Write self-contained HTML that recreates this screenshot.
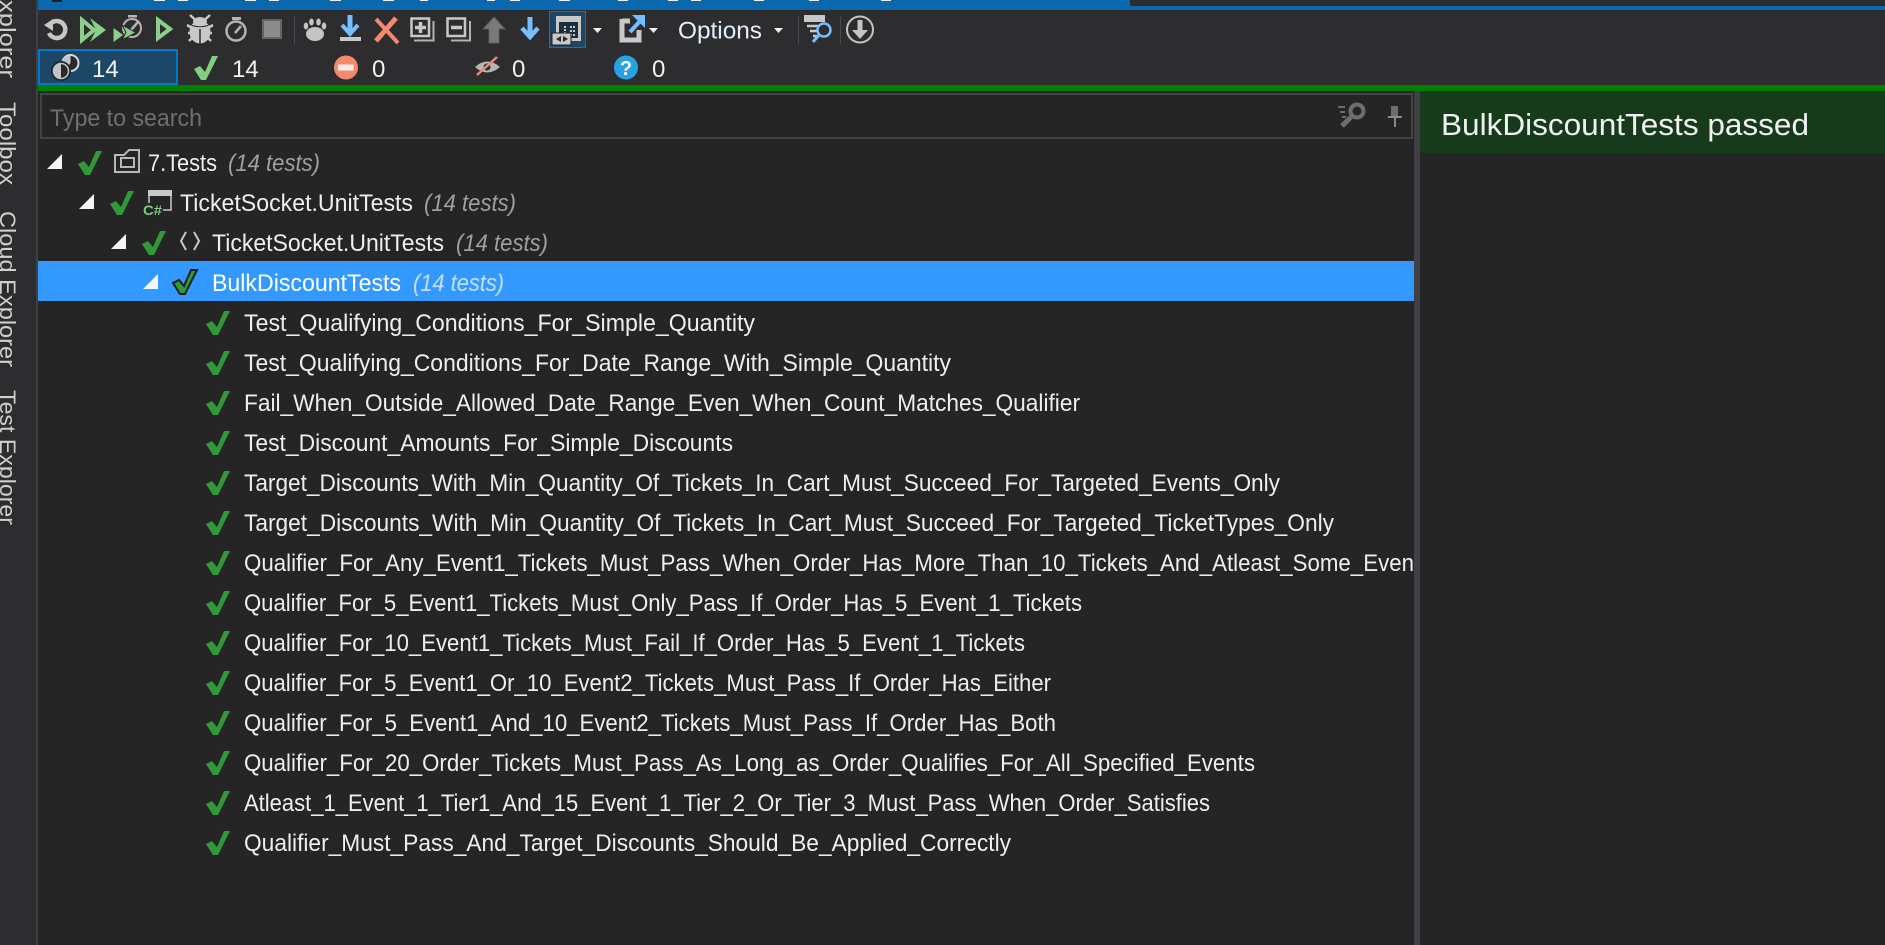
<!DOCTYPE html>
<html><head><meta charset="utf-8"><style>
html,body{margin:0;padding:0;background:#252526;width:1885px;height:945px;overflow:hidden}
svg{display:block;font-family:"Liberation Sans",sans-serif}
.t{fill:#eeeeee;font-size:24px}
.i{fill:#a0a0a0;font-size:24px;font-style:italic}
</style></head><body>
<svg width="1885" height="945" viewBox="0 0 1885 945" xmlns="http://www.w3.org/2000/svg">
<defs>
<polygon id="c" points="0,13 6,10 11,16 18,0 24,0 12,24 7,24"/>
<polygon id="tri" points="0,15 15,15 15,0" fill="#f5f5f5"/>
</defs>
<rect width="1885" height="945" fill="#252526"/>
<rect x="0" y="0" width="36" height="945" fill="#2d2d30"/>
<rect x="36" y="0" width="2" height="945" fill="#3f3f46"/>
<rect x="38" y="0" width="1847" height="91" fill="#2d2d30"/>
<rect x="38" y="0" width="1092" height="10" fill="#0a69ae"/>
<rect x="1130" y="6" width="755" height="4" fill="#0a69ae"/>
<g fill="#f0f0f0"><rect x="154" y="0" width="11" height="1"/><rect x="178" y="0" width="10" height="1"/><rect x="245" y="0" width="11" height="1"/><rect x="269" y="0" width="10" height="1"/><rect x="330" y="0" width="11" height="1"/><rect x="383" y="0" width="11" height="1"/><rect x="420" y="0" width="8" height="1"/><rect x="487" y="0" width="8" height="1"/><rect x="510" y="0" width="10" height="1"/><rect x="559" y="0" width="11" height="1"/><rect x="618" y="0" width="10" height="1"/><rect x="668" y="0" width="10" height="1"/><rect x="691" y="0" width="10" height="1"/><rect x="754" y="0" width="10" height="1"/><rect x="809" y="0" width="10" height="1"/><rect x="881" y="0" width="10" height="1"/></g>
<rect x="52" y="0" width="10" height="2" fill="#1e1e1e"/>

<!-- left rail -->
<g font-size="22" fill="#cfcfcf">
<text transform="translate(0,-17) rotate(90)" textLength="95" lengthAdjust="spacingAndGlyphs">Explorer</text>
<text transform="translate(0,102) rotate(90)" textLength="83" lengthAdjust="spacingAndGlyphs">Toolbox</text>
<text transform="translate(0,211) rotate(90)" textLength="156" lengthAdjust="spacingAndGlyphs">Cloud Explorer</text>
<text transform="translate(0,390) rotate(90)" textLength="135" lengthAdjust="spacingAndGlyphs">Test Explorer</text>
</g>

<!-- toolbar icons -->
<g>
<!-- refresh -->
<path d="M52 22.500 A8.500 8.500 0 1 1 49 33" fill="none" stroke="#c6c6c6" stroke-width="4.500"/>
<polygon points="44,25 53,19 53,31" fill="#c6c6c6"/>
<!-- run all -->
<path d="M82 20 L94 30 L82 40Z" fill="none" stroke="#8ad08a" stroke-width="4"/>
<polygon points="90,18 106,30 90,42 96,30" fill="#8ad08a"/>
<!-- run with stopwatch -->
<circle cx="132" cy="28" r="9" fill="none" stroke="#b4b4b4" stroke-width="2"/>
<rect x="128" y="15" width="9" height="2.500" fill="#b4b4b4"/>
<path d="M131 30 L138 22" stroke="#b4b4b4" stroke-width="2.500"/>
<polygon points="113,27 124,35 113,43" fill="#8ad08a" stroke="#2a2a2a" stroke-width="1"/>
<polygon points="122,25 136,32.500 122,40 126,32.500" fill="#8ad08a" stroke="#2a2a2a" stroke-width="1"/>
<!-- play -->
<path d="M158 20 L170 29 L158 38Z" fill="none" stroke="#8ad08a" stroke-width="4"/>
<!-- bug -->
<ellipse cx="200" cy="32" rx="10.500" ry="11.500" fill="#c8c8c8"/>
<ellipse cx="200" cy="21.500" rx="7" ry="4.500" fill="#c8c8c8"/>
<path d="M190 15 L195 19.500 M210 15 L205 19.500 M187 25 L192 28 M213 25 L208 28 M188 33 H192 M212 33 H208 M189 41 L192 38 M211 41 L208 38" stroke="#c8c8c8" stroke-width="2.500"/>
<path d="M200 29 V44" stroke="#2d2d30" stroke-width="1.500"/>
<path d="M192 25.500 Q200 28 208 25.500" fill="none" stroke="#2d2d30" stroke-width="1"/>
<!-- stopwatch -->
<circle cx="236" cy="31" r="9.500" fill="none" stroke="#b4b4b4" stroke-width="2.500"/>
<rect x="232" y="17" width="9" height="3" fill="#b4b4b4"/>
<path d="M235 33 L241 26" stroke="#b4b4b4" stroke-width="2.500"/>
<!-- stop -->
<rect x="263" y="20" width="18" height="18" fill="#8c8c8c" stroke="#666" stroke-width="2"/>
<rect x="294" y="16" width="1" height="28" fill="#4a4a4c"/>
<!-- paw -->
<ellipse cx="315" cy="34" rx="9" ry="7" fill="#c4c4c4"/>
<ellipse cx="306" cy="26" rx="2.300" ry="3.500" fill="#c4c4c4"/><ellipse cx="311.500" cy="22" rx="2.300" ry="3.500" fill="#c4c4c4"/><ellipse cx="318.500" cy="22" rx="2.300" ry="3.500" fill="#c4c4c4"/><ellipse cx="324" cy="26" rx="2.300" ry="3.500" fill="#c4c4c4"/>
<!-- step down arrow -->
<path d="M350 15 V32" stroke="#75beff" stroke-width="5"/>
<path d="M342 25 L350 34 L358 25" fill="none" stroke="#75beff" stroke-width="4"/>
<rect x="340" y="37" width="21" height="4" fill="#c8c8c8"/>
<!-- X -->
<path d="M376 19 L398 43" stroke="#f48771" stroke-width="4"/>
<path d="M396 18 L376 41" stroke="#f48771" stroke-width="5"/>
<!-- expand -->
<path d="M433.500 21 V40.500 H414" fill="none" stroke="#b4b4b4" stroke-width="2"/>
<rect x="411.500" y="18.500" width="17.500" height="17.500" fill="#2d2d30" stroke="#c8c8c8" stroke-width="2.500"/>
<path d="M415 27.500 H426 M420.500 22 V33" stroke="#c8c8c8" stroke-width="3.500"/>
<!-- collapse -->
<path d="M470 21 V40.500 H451" fill="none" stroke="#b4b4b4" stroke-width="2"/>
<rect x="447.500" y="18.500" width="17.500" height="17.500" fill="#2d2d30" stroke="#c8c8c8" stroke-width="2.500"/>
<path d="M451 27.500 H462" stroke="#c8c8c8" stroke-width="3.500"/>
<!-- up -->
<polygon points="494,17 505,29 499,29 499,43 489,43 489,29 483,29" fill="#7a7a7a" stroke="#5c5c5c" stroke-width="1"/>
<!-- down -->
<path d="M530 17 V36" stroke="#75beff" stroke-width="5"/>
<path d="M522 28 L530 37 L538 28" fill="none" stroke="#75beff" stroke-width="4.500"/>
<!-- selected grouping button -->
<rect x="549.500" y="11.500" width="36" height="36" fill="#1c4766" stroke="#007acc" stroke-width="1"/>
<rect x="556" y="16" width="25" height="25" fill="#1c2f3e"/>
<rect x="556" y="16" width="25" height="6" fill="#c8c8c8"/><rect x="556" y="22" width="3" height="14" fill="#c8c8c8"/><rect x="578" y="22" width="3" height="19" fill="#c8c8c8"/><rect x="566" y="38" width="15" height="3" fill="#c8c8c8"/>
<path d="M565 26 V34 M570 27 H576 M570 31 H576 M570 35 H576" stroke="#c8c8c8" stroke-width="2" stroke-dasharray="2 1"/>
<rect x="552" y="33" width="19" height="12" fill="#c8c8c8" stroke="#1e1e1e"/>
<polygon points="561,36 556,39 561,42" fill="#2d2d30"/><polygon points="563,36 568,39 563,42" fill="#2d2d30"/>
<polygon points="593,28 602,28 597.500,33" fill="#f1f1f1"/>
<!-- export -->
<path d="M622 21 H630 M622 19 V40 H639 V30" fill="none" stroke="#c8c8c8" stroke-width="5"/>
<path d="M630 32 L642 19" stroke="#75beff" stroke-width="4"/>
<polygon points="632,15 645,15 645,28" fill="#75beff"/>
<polygon points="649,28 658,28 653.500,33" fill="#f1f1f1"/>
<text x="678" y="38.500" font-size="24" fill="#e4effb" textLength="84" lengthAdjust="spacingAndGlyphs">Options</text>
<polygon points="774,28 783,28 778.500,33" fill="#f1f1f1"/>
<rect x="798" y="16" width="1" height="28" fill="#4a4a4c"/>
<!-- filter -->
<polygon points="804,15 825,15 825,22 804,22" fill="#c8c8c8"/>
<path d="M807 26 H821 M810 31 H818 M813 36 H817" stroke="#c8c8c8" stroke-width="2.500"/>
<circle cx="824" cy="30" r="6.500" fill="#2d2d30" stroke="#75beff" stroke-width="2.500"/>
<path d="M819 35 L813 42" stroke="#75beff" stroke-width="3"/>
<rect x="840" y="16" width="1" height="28" fill="#4a4a4c"/>
<circle cx="860" cy="29.500" r="13" fill="none" stroke="#c4c4c4" stroke-width="2"/>
<path d="M860 20 V34" stroke="#c4c4c4" stroke-width="5"/>
<polygon points="852,30 868,30 860,39" fill="#c4c4c4"/>
</g>

<!-- counters -->
<rect x="39" y="50" width="138" height="34" fill="#1c4766" stroke="#007acc" stroke-width="2"/>
<circle cx="70.500" cy="63" r="8" fill="#2a2a2c" stroke="#d8d8d8" stroke-width="2"/>
<path d="M70.500 56 A7 7 0 0 0 66 69 L70.500 63Z" fill="#c4c4c4"/>
<circle cx="61" cy="71" r="9" fill="#2a2a2c" stroke="#1e2a33" stroke-width="2"/>
<circle cx="61" cy="71" r="7.500" fill="none" stroke="#c4c4c4" stroke-width="1.500"/>
<path d="M61 63.500 A7.500 7.500 0 0 0 61 78.500Z" fill="#c4c4c4"/>
<g font-size="24" fill="#f1f1f1">
<text x="92" y="77">14</text>
<text x="232" y="77">14</text>
<text x="372" y="77">0</text>
<text x="512" y="77">0</text>
<text x="652" y="77">0</text>
</g>
<use href="#c" x="194" y="56" fill="#80d080"/>
<circle cx="346" cy="67.500" r="12" fill="#f58b6c"/>
<rect x="338" y="64.500" width="15.500" height="6" fill="#eeeeee"/>
<path d="M475 67 Q487 56 500 67 Q487 78 475 67Z" fill="#b4b4b4"/>
<circle cx="487" cy="67" r="3.500" fill="#2d2d30"/>
<path d="M477 75 L497 57" stroke="#f48771" stroke-width="2.500"/>
<circle cx="626" cy="67.500" r="12" fill="#27a3e3"/>
<text x="626" y="75" font-size="20" font-weight="bold" fill="#fff" text-anchor="middle">?</text>

<rect x="38" y="85" width="1847" height="6" fill="#008000"/>

<!-- splitter + details -->
<rect x="1414" y="91" width="6" height="854" fill="#3f3f46"/>
<rect x="1420" y="91" width="465" height="62" fill="#173a1b"/>
<text x="1441" y="135" font-size="31" fill="#f1f1f1" textLength="368" lengthAdjust="spacingAndGlyphs">BulkDiscountTests passed</text>

<!-- search box -->
<rect x="41" y="94" width="1371" height="44" fill="#252526" stroke="#434346" stroke-width="2"/>
<text x="50" y="126" font-size="24" fill="#6f6f6f" textLength="152" lengthAdjust="spacingAndGlyphs">Type to search</text>
<circle cx="1357" cy="111" r="6.500" fill="none" stroke="#6e6e6e" stroke-width="4"/>
<path d="M1351 117 L1342 126" stroke="#6e6e6e" stroke-width="5"/>
<path d="M1338 107 H1345 M1340 112 H1345 M1342 117 H1346" stroke="#6e6e6e" stroke-width="2"/>
<rect x="1391" y="106" width="7" height="11" fill="#6e6e6e"/>
<rect x="1388" y="116" width="14" height="2" fill="#8a8a8a"/>
<rect x="1394" y="118" width="2" height="9" fill="#8a8a8a"/>

<!-- tree -->
<rect x="38" y="261" width="1376" height="40" fill="#3399ff"/>
<use href="#tri" x="47" y="154"/><use href="#tri" x="79" y="194"/><use href="#tri" x="111" y="234"/><use href="#tri" x="143" y="274"/>
<g fill="#2f9a37">
<use href="#c" x="78" y="151"/><use href="#c" x="110" y="191"/><use href="#c" x="142" y="231"/>
<use href="#c" x="173" y="270" stroke="#1e1e1e" stroke-width="2"/>
<use href="#c" x="206" y="311"/><use href="#c" x="206" y="351"/><use href="#c" x="206" y="391"/><use href="#c" x="206" y="431"/><use href="#c" x="206" y="471"/><use href="#c" x="206" y="511"/><use href="#c" x="206" y="551"/><use href="#c" x="206" y="591"/><use href="#c" x="206" y="631"/><use href="#c" x="206" y="671"/><use href="#c" x="206" y="711"/><use href="#c" x="206" y="751"/><use href="#c" x="206" y="791"/><use href="#c" x="206" y="831"/>
</g>
<!-- folder -->
<path d="M115 172 V155 H124 L129 150 H139 V172Z" fill="none" stroke="#b8b8b8" stroke-width="2"/>
<rect x="121" y="158" width="13" height="9" fill="none" stroke="#b8b8b8" stroke-width="2"/>
<!-- c# project -->
<rect x="148" y="190" width="24" height="6" fill="#c8c8c8"/>
<path d="M171 196 V210 H163 M149 196 V203" fill="none" stroke="#c8c8c8" stroke-width="1.500"/>
<text x="143" y="215" font-size="14" font-weight="bold" fill="#7dcd7d" textLength="19" lengthAdjust="spacingAndGlyphs">C#</text>
<!-- namespace -->
<path d="M186 232 L181 241 L186 250 M194 232 L199 241 L194 250" fill="none" stroke="#c8c8c8" stroke-width="2"/>

<text class="t" x="148" y="171" textLength="69" lengthAdjust="spacingAndGlyphs">7.Tests</text>
<text class="i" x="228" y="171" textLength="92" lengthAdjust="spacingAndGlyphs">(14 tests)</text>
<text class="t" x="180" y="211" textLength="233" lengthAdjust="spacingAndGlyphs">TicketSocket.UnitTests</text>
<text class="i" x="424" y="211" textLength="92" lengthAdjust="spacingAndGlyphs">(14 tests)</text>
<text class="t" x="212" y="251" textLength="232" lengthAdjust="spacingAndGlyphs">TicketSocket.UnitTests</text>
<text class="i" x="456" y="251" textLength="92" lengthAdjust="spacingAndGlyphs">(14 tests)</text>
<text class="t" x="212" y="291" style="fill:#fff" textLength="189" lengthAdjust="spacingAndGlyphs">BulkDiscountTests</text>
<text class="i" x="413" y="291" style="fill:#c4e0ff" textLength="91" lengthAdjust="spacingAndGlyphs">(14 tests)</text>

<g>
<text class="t" x="244" y="331" textLength="511" lengthAdjust="spacingAndGlyphs">Test_Qualifying_Conditions_For_Simple_Quantity</text>
<text class="t" x="244" y="371" textLength="707" lengthAdjust="spacingAndGlyphs">Test_Qualifying_Conditions_For_Date_Range_With_Simple_Quantity</text>
<text class="t" x="244" y="411" textLength="836" lengthAdjust="spacingAndGlyphs">Fail_When_Outside_Allowed_Date_Range_Even_When_Count_Matches_Qualifier</text>
<text class="t" x="244" y="451" textLength="489" lengthAdjust="spacingAndGlyphs">Test_Discount_Amounts_For_Simple_Discounts</text>
<text class="t" x="244" y="491" textLength="1036" lengthAdjust="spacingAndGlyphs">Target_Discounts_With_Min_Quantity_Of_Tickets_In_Cart_Must_Succeed_For_Targeted_Events_Only</text>
<text class="t" x="244" y="531" textLength="1090" lengthAdjust="spacingAndGlyphs">Target_Discounts_With_Min_Quantity_Of_Tickets_In_Cart_Must_Succeed_For_Targeted_TicketTypes_Only</text>
<text class="t" x="244" y="571" textLength="1170" lengthAdjust="spacingAndGlyphs">Qualifier_For_Any_Event1_Tickets_Must_Pass_When_Order_Has_More_Than_10_Tickets_And_Atleast_Some_Even</text>
<text class="t" x="244" y="611" textLength="838" lengthAdjust="spacingAndGlyphs">Qualifier_For_5_Event1_Tickets_Must_Only_Pass_If_Order_Has_5_Event_1_Tickets</text>
<text class="t" x="244" y="651" textLength="781" lengthAdjust="spacingAndGlyphs">Qualifier_For_10_Event1_Tickets_Must_Fail_If_Order_Has_5_Event_1_Tickets</text>
<text class="t" x="244" y="691" textLength="807" lengthAdjust="spacingAndGlyphs">Qualifier_For_5_Event1_Or_10_Event2_Tickets_Must_Pass_If_Order_Has_Either</text>
<text class="t" x="244" y="731" textLength="812" lengthAdjust="spacingAndGlyphs">Qualifier_For_5_Event1_And_10_Event2_Tickets_Must_Pass_If_Order_Has_Both</text>
<text class="t" x="244" y="771" textLength="1011" lengthAdjust="spacingAndGlyphs">Qualifier_For_20_Order_Tickets_Must_Pass_As_Long_as_Order_Qualifies_For_All_Specified_Events</text>
<text class="t" x="244" y="811" textLength="966" lengthAdjust="spacingAndGlyphs">Atleast_1_Event_1_Tier1_And_15_Event_1_Tier_2_Or_Tier_3_Must_Pass_When_Order_Satisfies</text>
<text class="t" x="244" y="851" textLength="767" lengthAdjust="spacingAndGlyphs">Qualifier_Must_Pass_And_Target_Discounts_Should_Be_Applied_Correctly</text>
</g>
</svg>
</body></html>
